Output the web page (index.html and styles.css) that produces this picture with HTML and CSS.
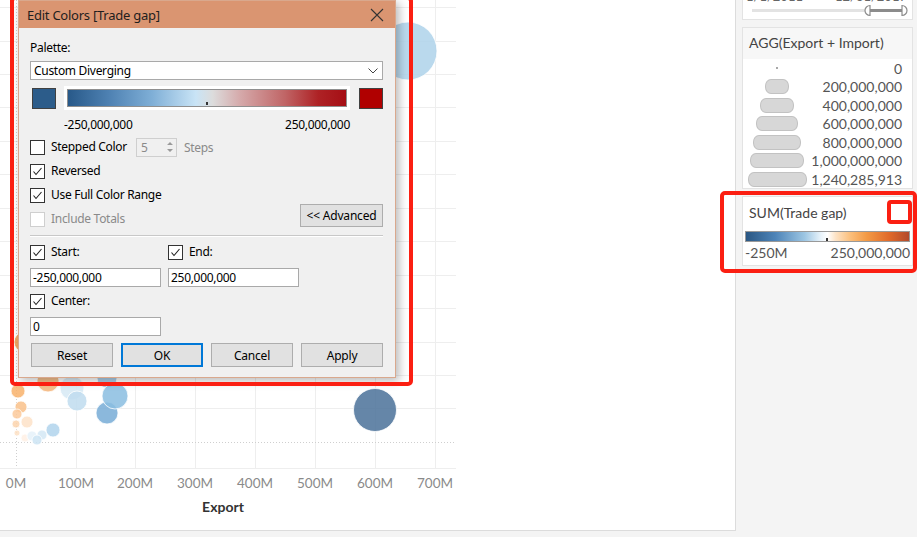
FILE: index.html
```html
<!DOCTYPE html>
<html>
<head>
<meta charset="utf-8">
<link rel="stylesheet" href="styles.css">
</head>
<body>
<div class="app">
  <div class="view">
    <svg class="plot" width="735" height="530" viewBox="0 0 735 530">
      <g stroke="#eeeeee" stroke-width="1">
        <line x1="0" y1="7.5" x2="456" y2="7.5"/>
        <line x1="0" y1="41.5" x2="456" y2="41.5"/>
        <line x1="0" y1="74.5" x2="456" y2="74.5"/>
        <line x1="0" y1="107.5" x2="456" y2="107.5"/>
        <line x1="0" y1="141.5" x2="456" y2="141.5"/>
        <line x1="0" y1="174.5" x2="456" y2="174.5"/>
        <line x1="0" y1="208.5" x2="456" y2="208.5"/>
        <line x1="0" y1="241.5" x2="456" y2="241.5"/>
        <line x1="0" y1="275.5" x2="456" y2="275.5"/>
        <line x1="0" y1="308.5" x2="456" y2="308.5"/>
        <line x1="0" y1="342.5" x2="456" y2="342.5"/>
        <line x1="0" y1="375.5" x2="456" y2="375.5"/>
        <line x1="0" y1="408.5" x2="456" y2="408.5"/>
        <line x1="0" y1="468.5" x2="456" y2="468.5"/>
        <line x1="76.5" y1="0" x2="76.5" y2="468"/>
        <line x1="135.5" y1="0" x2="135.5" y2="468"/>
        <line x1="195.5" y1="0" x2="195.5" y2="468"/>
        <line x1="255.5" y1="0" x2="255.5" y2="468"/>
        <line x1="315.5" y1="0" x2="315.5" y2="468"/>
        <line x1="375.5" y1="0" x2="375.5" y2="468"/>
        <line x1="435.5" y1="0" x2="435.5" y2="468"/>
      </g>
      <g stroke="#cfcfcf" stroke-width="1" stroke-dasharray="1 2">
        <line x1="0" y1="442.5" x2="456" y2="442.5"/>
        <line x1="16.5" y1="0" x2="16.5" y2="468"/>
      </g>
      <g stroke="#ffffff" stroke-width="0.8" fill-opacity="0.85">
        <circle cx="408" cy="51" r="29" fill="#aed2ea"/>
        <circle cx="24" cy="342" r="10" fill="#ee9a4c"/>
        <circle cx="48" cy="381" r="11" fill="#f5b57a"/>
        <circle cx="107" cy="378" r="10" fill="#9cc6e4"/>
        <circle cx="72" cy="388" r="12" fill="#d6e9f5"/>
        <circle cx="77" cy="401" r="10" fill="#c0dcef"/>
        <circle cx="107" cy="413" r="11" fill="#77acd6"/>
        <circle cx="115" cy="396" r="13" fill="#8abde0"/>
        <circle cx="53" cy="430" r="7" fill="#b0d4ec"/>
        <circle cx="18" cy="391" r="7" fill="#f8b26b"/>
        <circle cx="21" cy="407" r="6" fill="#f9c189"/>
        <circle cx="17" cy="414" r="5" fill="#fbc99a"/>
        <circle cx="27" cy="422" r="6" fill="#fde2c8"/>
        <circle cx="16" cy="424" r="4" fill="#fcd3ad"/>
        <circle cx="17" cy="433" r="3" fill="#fde0c4"/>
        <circle cx="25" cy="438" r="4" fill="#fff0e4"/>
        <circle cx="42" cy="435" r="5" fill="#d3e7f5"/>
        <circle cx="32" cy="436" r="5" fill="#e5f1f9"/>
        <circle cx="37" cy="440" r="5" fill="#cde4f3"/>
        <circle cx="375" cy="410" r="21.5" fill="#4a7199"/>
      </g>
      <g class="tick" fill="#8a8a8a" text-anchor="middle">
        <text x="16" y="488">0M</text>
        <text x="76" y="488">100M</text>
        <text x="135" y="488">200M</text>
        <text x="195" y="488">300M</text>
        <text x="255" y="488">400M</text>
        <text x="315" y="488">500M</text>
        <text x="375" y="488">600M</text>
        <text x="435" y="488">700M</text>
      </g>
      <text class="axis-title" x="223" y="512" text-anchor="middle">Export</text>
    </svg>

    <div class="dialog">
      <div class="dlg-title">
        <span>Edit Colors [Trade gap]</span>
        <svg class="close" width="14" height="14" viewBox="0 0 14 14"><path d="M1 1 L13 13 M13 1 L1 13" stroke="#333" stroke-width="1.1" fill="none"/></svg>
      </div>
      <div class="dlg-body">
        <div class="lbl">Palette:</div>
        <div class="select">
          <span>Custom Diverging</span>
          <svg class="chev" width="10" height="6" viewBox="0 0 10 6"><path d="M0.5 0.5 L5 5 L9.5 0.5" stroke="#444" stroke-width="1" fill="none"/></svg>
        </div>
        <div class="ramp-row">
          <span class="swatch sw-blue"></span>
          <div class="ramp-box"><div class="ramp"></div><span class="ramp-tick"></span></div>
          <span class="swatch sw-red"></span>
        </div>
        <div class="ramp-labels"><span>-250,000,000</span><span>250,000,000</span></div>

        <div class="chk-row">
          <span class="cb"></span>
          <span class="cb-label stepped">Stepped Color</span>
          <div class="spin"><span>5</span>
            <svg width="8" height="14" viewBox="0 0 8 14"><path d="M1 5 L4 2 L7 5 Z M1 9 L4 12 L7 9 Z" fill="#9a9a9a"/></svg>
          </div>
          <span class="muted steps">Steps</span>
        </div>
        <div class="chk-row">
          <span class="cb"><svg width="13" height="13" viewBox="0 0 13 13"><path d="M2.5 6.5 L5 9.5 L10.5 3" stroke="#222" stroke-width="1.1" fill="none"/></svg></span>
          <span class="cb-label">Reversed</span>
        </div>
        <div class="chk-row">
          <span class="cb"><svg width="13" height="13" viewBox="0 0 13 13"><path d="M2.5 6.5 L5 9.5 L10.5 3" stroke="#222" stroke-width="1.1" fill="none"/></svg></span>
          <span class="cb-label">Use Full Color Range</span>
        </div>
        <div class="chk-row">
          <span class="cb disabled"></span>
          <span class="cb-label muted">Include Totals</span>
          <button class="btn adv">&lt;&lt; Advanced</button>
        </div>
        <div class="sep"></div>
        <div class="pair-row">
          <div class="chk-row">
            <span class="cb"><svg width="13" height="13" viewBox="0 0 13 13"><path d="M2.5 6.5 L5 9.5 L10.5 3" stroke="#222" stroke-width="1.1" fill="none"/></svg></span>
            <span class="cb-label">Start:</span>
          </div>
          <div class="chk-row">
            <span class="cb"><svg width="13" height="13" viewBox="0 0 13 13"><path d="M2.5 6.5 L5 9.5 L10.5 3" stroke="#222" stroke-width="1.1" fill="none"/></svg></span>
            <span class="cb-label">End:</span>
          </div>
        </div>
        <div class="pair-row inputs">
          <div class="input">-250,000,000</div>
          <div class="input">250,000,000</div>
        </div>
        <div class="chk-row">
          <span class="cb"><svg width="13" height="13" viewBox="0 0 13 13"><path d="M2.5 6.5 L5 9.5 L10.5 3" stroke="#222" stroke-width="1.1" fill="none"/></svg></span>
          <span class="cb-label">Center:</span>
        </div>
        <div class="input center-input">0</div>
        <div class="btn-row">
          <button class="btn">Reset</button>
          <button class="btn primary">OK</button>
          <button class="btn">Cancel</button>
          <button class="btn">Apply</button>
        </div>
      </div>
    </div>
    <div class="hl hl-dialog"></div>
  </div>

  <aside class="side">
    <div class="card filter">
      <div class="dates"><span>1/1/2011</span><span>12/31/2017</span></div>
      <svg class="slider" width="169" height="17" viewBox="0 0 169 17">
        <rect x="9" y="7" width="154" height="3" fill="#e3e3e3"/>
        <rect x="124" y="7" width="39" height="3" fill="#8c8c8c"/>
        <path d="M127 3.5 A5 5 0 0 0 127 13.5 Z" fill="#fff" stroke="#8c8c8c" stroke-width="1.2"/>
        <path d="M159 3.5 A5 5 0 0 1 159 13.5 Z" fill="#fff" stroke="#8c8c8c" stroke-width="1.2"/>
      </svg>
    </div>

    <div class="card size-legend">
      <div class="legend-head">AGG(Export + Import)</div>
      <div class="size-rows">
        <div class="size-row"><span class="shape-cell"><span class="dot"></span></span><span class="num">0</span></div>
        <div class="size-row"><span class="shape-cell"><span class="pill" style="width:24px"></span></span><span class="num">200,000,000</span></div>
        <div class="size-row"><span class="shape-cell"><span class="pill" style="width:34px"></span></span><span class="num">400,000,000</span></div>
        <div class="size-row"><span class="shape-cell"><span class="pill" style="width:42px"></span></span><span class="num">600,000,000</span></div>
        <div class="size-row"><span class="shape-cell"><span class="pill" style="width:48px"></span></span><span class="num">800,000,000</span></div>
        <div class="size-row"><span class="shape-cell"><span class="pill" style="width:54px"></span></span><span class="num">1,000,000,000</span></div>
        <div class="size-row"><span class="shape-cell"><span class="pill" style="width:59px"></span></span><span class="num">1,240,285,913</span></div>
      </div>
    </div>

    <div class="card color-legend">
      <div class="legend-title">SUM(Trade gap)</div>
      <div class="cl-ramp"><span class="cl-tick"></span></div>
      <div class="cl-labels"><span>-250M</span><span>250,000,000</span></div>
      <span class="hl hl-mini"></span>
      <span class="hl hl-legend"></span>
    </div>
  </aside>
</div>
</body>
</html>
```

FILE: styles.css
```css
* { box-sizing: border-box; }

body {
  margin: 0;
  width: 917px;
  height: 550px;
  overflow: hidden;
  background: #ffffff;
  font-family: "Lato", "Open Sans", sans-serif;
}

.app {
  display: flex;
  height: 537px;
  background: #f4f4f4;
}

.view {
  position: relative;
  width: 736px;
  height: 531px;
  flex: none;
  background: #ffffff;
  border-right: 1px solid #dcdcdc;
  border-bottom: 1px solid #dcdcdc;
}

.plot { display: block; }
.tick { font-family: "Lato", sans-serif; font-size: 13.5px; }
.axis-title { font-family: "Lato", sans-serif; font-size: 14px; font-weight: 700; fill: #333; }

/* ---------- Dialog ---------- */
.dialog {
  position: absolute;
  left: 18px;
  top: 0;
  width: 378px;
  height: 378px;
  background: #f0f0f0;
  border: 1px solid #d9a88d;
  box-shadow: 3px 3px 9px rgba(0,0,0,0.28);
  font-family: "Noto Sans", "Open Sans", sans-serif;
  font-size: 12px;
  letter-spacing: -0.3px;
  color: #000;
}

.dlg-title {
  height: 27px;
  background: #da9571;
  display: flex;
  align-items: center;
  justify-content: space-between;
  padding: 0 11px 0 8px;
  font-size: 13px;
  letter-spacing: -0.25px;
  color: #1e1e1e;
}

.close { display: block; }

.dlg-body {
  padding: 12px 12px 0 11px;
  display: flex;
  flex-direction: column;
}

.lbl { height: 16px; line-height: 16px; }

.select {
  margin-top: 5px;
  height: 19px;
  background: #fff;
  border: 1px solid #a9a9a9;
  display: flex;
  align-items: center;
  justify-content: space-between;
  padding: 0 4px 0 3px;
  line-height: 17px;
}

.ramp-row {
  margin-top: 6px;
  height: 24px;
  display: flex;
  align-items: center;
}

.swatch {
  width: 24px;
  height: 21px;
  border: 1px solid #404040;
  flex: none;
}
.sw-blue { background: #2c5c8a; margin-left: 2px; }
.sw-red { background: #b00000; margin-left: 9px; }

.ramp-box {
  position: relative;
  margin-left: 8px;
  width: 286px;
  height: 24px;
  background: #fff;
  padding: 3px;
}

.ramp {
  height: 18px;
  border: 1px solid #8f8f8f;
  background: linear-gradient(to right, #285989 0%, #4f82b3 15%, #7eaed6 30%, #c9e4f6 46%, #dcdcdc 52%, #d5a9aa 62%, #c06566 78%, #ae2225 90%, #a50f15 100%);
}

.ramp-tick {
  position: absolute;
  left: 142px;
  bottom: 5px;
  width: 2px;
  height: 3px;
  background: #333;
}

.ramp-labels {
  margin-top: 7px;
  height: 16px;
  line-height: 16px;
  display: flex;
  justify-content: space-between;
  padding: 0 33px 0 34px;
}

.chk-row {
  height: 24px;
  display: flex;
  align-items: center;
}
.ramp-labels + .chk-row { margin-top: 2px; }

.cb {
  width: 15px;
  height: 15px;
  flex: none;
  background: #fff;
  border: 1px solid #333;
  display: flex;
  align-items: center;
  justify-content: center;
}
.cb svg { display: block; }
.cb.disabled { border-color: #cfcfcf; }

.cb-label { margin-left: 6px; line-height: 16px; }
.stepped { width: 85px; }
.muted { color: #8a8a8a; }

.spin {
  width: 41px;
  height: 19px;
  border: 1px solid #cfcfcf;
  background: #f0f0f0;
  display: flex;
  align-items: center;
  justify-content: space-between;
  padding: 0 2px 0 4px;
  color: #8a8a8a;
}
.spin svg { display: block; }
.steps { margin-left: 7px; }

.btn {
  font-family: "Noto Sans", "Open Sans", sans-serif;
  font-size: 12px;
  letter-spacing: -0.2px;
  color: #000;
  background: #e1e1e1;
  border: 1px solid #adadad;
  height: 24px;
  width: 82px;
  padding: 0;
}
.btn.primary { border: 1px solid #0078d7; box-shadow: inset 0 0 0 1px #0078d7; }
.adv {
  margin-left: auto;
  align-self: flex-start;
  margin-top: -3px;
  width: 83px;
  height: 23px;
}

.sep {
  margin-top: 4px;
  background: #c8c8c8;
  border-bottom: 1px solid #fff;
  height: 2px;
}

.pair-row {
  margin-top: 3px;
  display: grid;
  grid-template-columns: 138px 1fr;
}
.pair-row.inputs { margin-top: 4px; margin-bottom: 2px; }

.input {
  width: 131px;
  height: 19px;
  background: #fff;
  border: 1px solid #a9a9a9;
  line-height: 17px;
  padding-left: 2px;
}
.center-input { margin-top: 4px; }

.btn-row {
  margin-top: 7px;
  padding-left: 1px;
  display: flex;
  gap: 8px;
}

/* highlight boxes */
.hl {
  position: absolute;
  border: 4px solid #fb1f12;
  border-radius: 5px;
  pointer-events: none;
}
.hl-dialog { left: 10px; top: -4px; width: 403px; height: 390px; }

/* ---------- Side panel ---------- */
.side {
  flex: 1;
  padding: 0 4px 0 6px;
  display: flex;
  flex-direction: column;
  gap: 7px;
  font-family: "Lato", "Open Sans", sans-serif;
}

.card {
  position: relative;
  width: 171px;
  background: #fff;
  border: 1px solid #e3e3e3;
}

.filter { margin-top: -11px; }
.dates {
  height: 12px;
  display: flex;
  justify-content: space-between;
  padding: 0 5px 0 3px;
  font-size: 13px;
  line-height: 12px;
  color: #666;
}
.slider { display: block; }

.size-legend { height: 162px; }
.legend-head {
  height: 31px;
  background: #f7f7f7;
  padding-left: 6px;
  line-height: 30px;
  font-size: 14px;
  color: #444;
}
.size-row {
  height: 18.5px;
  display: flex;
  align-items: center;
}
.shape-cell {
  width: 68px;
  display: flex;
  justify-content: center;
}
.dot { width: 2px; height: 2px; background: #a8a8a8; }
.pill {
  height: 15px;
  background: #d7d7d7;
  border: 1px solid #c2c2c2;
  border-radius: 6px / 7px;
}
.num {
  flex: 1;
  text-align: right;
  padding-right: 10px;
  font-size: 14px;
  color: #555;
}

.color-legend {
  height: 70px;
  padding: 7px 2px 0 2px;
}
.legend-title {
  height: 18px;
  line-height: 18px;
  padding-left: 4px;
  font-size: 14px;
  color: #444;
}
.cl-ramp {
  position: relative;
  margin-top: 9px;
  height: 11px;
  border: 1px solid #999;
  background: linear-gradient(to right, #2a5783 0%, #4e84b8 18%, #9dc6e3 36%, #e9f3fa 46%, #ffffff 50%, #fde3c6 55%, #fbbf7c 64%, #f39a45 74%, #e0692a 88%, #b24a2c 100%);
}
.cl-tick {
  position: absolute;
  left: 80px;
  bottom: 0;
  width: 2px;
  height: 3px;
  background: #333;
}
.cl-labels {
  margin-top: 3px;
  display: flex;
  justify-content: space-between;
  font-size: 14px;
  line-height: 16px;
  color: #555;
}

.hl-mini {
  left: 144px;
  top: 3px;
  width: 25px;
  height: 24px;
  border-radius: 4px;
}
.hl-legend {
  left: -23px;
  top: -6px;
  width: 197px;
  height: 82px;
}
```
